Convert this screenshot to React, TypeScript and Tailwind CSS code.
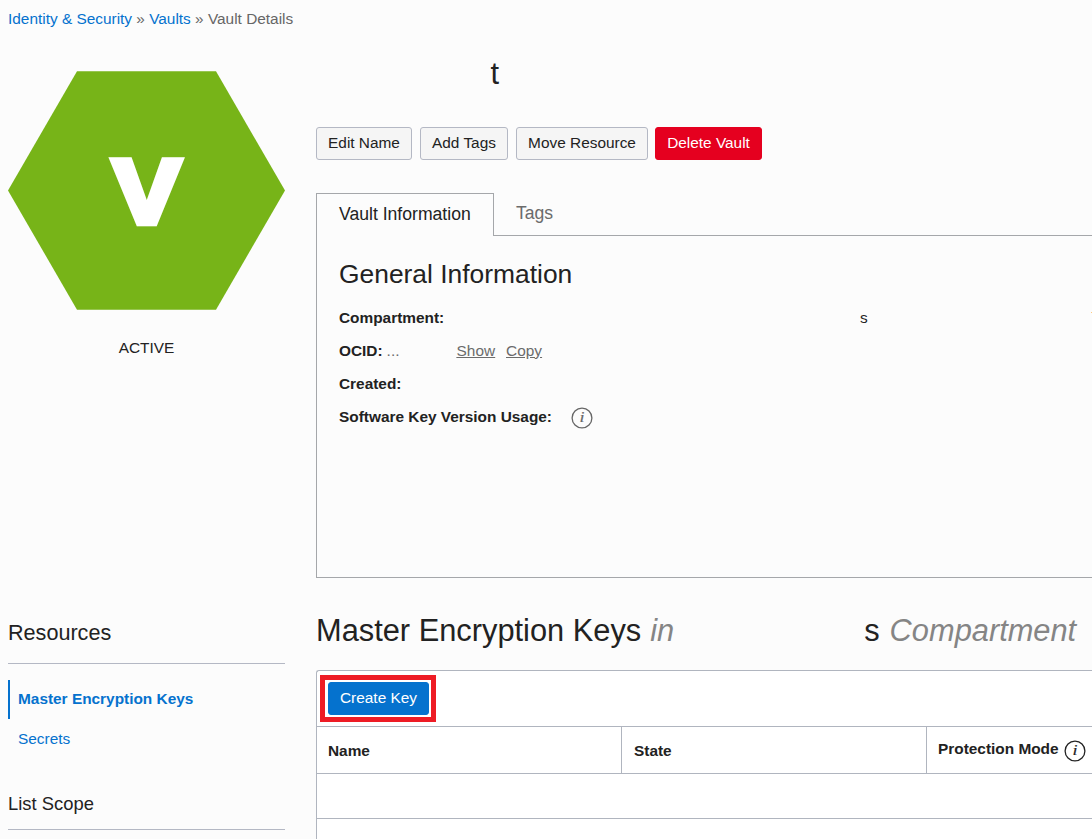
import type { ReactNode } from "react";

function InfoIcon({ className }: { className: string }) {
  return (
    <svg width="22" height="22" viewBox="0 0 22 22" className={className}>
      <circle cx="11" cy="11" r="9.9" fill="none" stroke="currentColor" strokeWidth="1.3" />
      <text
        transform="translate(11 15.4) scale(1.25 1)"
        textAnchor="middle"
        fill="currentColor"
        stroke="currentColor"
        strokeWidth="0.15"
        className="font-['Liberation_Serif',serif] text-[14.5px] font-normal italic"
      >
        i
      </text>
    </svg>
  );
}

function Button({ className, children }: { className: string; children: ReactNode }) {
  return (
    <button
      className={`h-[33px] shrink-0 rounded-[3px] border pb-px text-center leading-[30px] whitespace-nowrap ${className}`}
    >
      {children}
    </button>
  );
}

const neutral = "border-[#b4b8c4] bg-[#f5f5f5] text-[#222]";

function Sidebar() {
  return (
    <aside className="w-[277px] shrink-0">
      <div className="pt-[33px]">
        <svg width="277" height="239" viewBox="0 0 277 239" className="block">
          <polygon points="69,0.3 208,0.3 277,119.5 208,238.7 69,238.7 0,119.5" fill="#77b418" />
          <text
            transform="translate(138.7 151.8) scale(1.11 1)"
            textAnchor="middle"
            fill="#fff"
            stroke="#fff"
            strokeWidth="6.6"
            strokeLinejoin="miter"
            className="font-['Liberation_Sans',Arial,sans-serif] text-[91px] font-bold"
          >
            V
          </text>
        </svg>
      </div>
      <p className="mt-[28px] text-center leading-[20px]">ACTIVE</p>

      <h2 className="mt-[260px] h-[46px] border-b border-[#b4b8c4] text-[21.6px] leading-[30px]">Resources</h2>
      <nav className="mt-[16px] text-[#0572ce]">
        <a className="block h-[39px] border-l-2 border-[#0572ce] pl-2 leading-[38px] font-bold">
          Master Encryption Keys
        </a>
        <a className="block h-[39px] pl-[10px] leading-[40px]">Secrets</a>
      </nav>
      <h2 className="mt-[31px] h-[41px] border-b border-[#b4b8c4] text-[18.4px] leading-[30px]">List Scope</h2>
    </aside>
  );
}

function VaultPanel() {
  return (
    <section className="mt-[33px]">
      <div className="flex h-[43px] text-[17.6px]">
        <div className="w-[178px] border-x border-t border-[#a5a7aa] pl-[22px] leading-[41px]">Vault Information</div>
        <div className="flex-1 border-b border-[#a5a7aa] pl-[22px] leading-[40px] text-[#6b6b6b]">Tags</div>
      </div>
      <div className="h-[342px] border-b border-l border-[#a5a7aa] pt-[22px] pl-[22px]">
        <h2 className="text-[26.4px] leading-[32px]">General Information</h2>
        <dl className="mt-[11px] leading-[33px]">
          <div className="flex h-[33px]">
            <dt className="w-[521px] font-bold">Compartment:</dt>
            <dd>s</dd>
          </div>
          <div className="flex h-[33px]">
            <dt className="font-bold">OCID:</dt>
            <dd className="ml-[4px] w-[70px] text-[#6b6b6b]">...</dd>
            <dd className="flex gap-[11px] text-[#6b6b6b] underline">
              <a>Show</a>
              <a>Copy</a>
            </dd>
          </div>
          <div className="h-[33px]">
            <dt className="font-bold">Created:</dt>
          </div>
          <div className="flex h-[33px]">
            <dt className="font-bold">Software Key Version Usage:</dt>
            <dd className="pt-[7px] pl-[19px]">
              <InfoIcon className="text-[#666]" />
            </dd>
          </div>
        </dl>
      </div>
    </section>
  );
}

function KeysTable() {
  return (
    <section>
      <h1 className="mt-[33px] flex h-[59px] text-[30.8px] leading-[40px] whitespace-nowrap">
        <span>Master Encryption Keys</span>
        <span className="ml-[9px] w-[214px] text-[#858585] italic">in</span>
        <span>s</span>
        <span className="ml-[10px] text-[#858585] italic">Compartment</span>
      </h1>
      <div className="h-[200px] rounded-tl-[3px] border-t border-l border-[#b0b5bf] bg-white">
        <div className="flex h-[55px] items-start pt-[4px] pl-[3px]">
          <div className="border-[5px] border-[#ee1c25] py-[2px] pr-[2px] pl-[3px]">
            <Button className="block w-[101px] border-[#0572ce] bg-[#0572ce] text-white">Create Key</Button>
          </div>
        </div>
        <div className="flex h-[48px] border-y border-[#b0b5bf] leading-[47px] font-bold">
          <div className="w-[305px] shrink-0 border-r border-[#b0b5bf] pl-[11px]">Name</div>
          <div className="w-[305px] shrink-0 border-r border-[#b0b5bf] pl-[12px]">State</div>
          <div className="flex shrink-0 pl-[11px] leading-[44px]">
            Protection Mode
            <InfoIcon className="mt-[13px] ml-[5px] text-[#222]" />
          </div>
        </div>
        <div className="h-[45px] border-b border-[#b0b5bf]" />
      </div>
    </section>
  );
}

export default function App() {
  return (
    <div className="relative h-[839px] w-[1092px] overflow-hidden bg-[#fcfcfc] pl-2 font-['Liberation_Sans',Arial,sans-serif] text-[15.4px] text-[#222]">
      <nav className="h-[38px] leading-[38px] whitespace-pre text-[#666]">
        <a className="text-[#0572ce]">Identity &amp; Security</a>
        {" » "}
        <a className="text-[#0572ce]">Vaults</a>
        {" » Vault Details"}
      </nav>
      <div className="flex gap-[31px]">
        <Sidebar />
        <main className="min-w-0 flex-1">
          <h1 className="h-[89px] pt-[16px] pl-[174.5px] text-[30.8px] leading-[40px]">t</h1>
          <div className="flex">
            <Button className={`w-[96px] ${neutral}`}>Edit Name</Button>
            <Button className={`ml-2 w-[88px] ${neutral}`}>Add Tags</Button>
            <Button className={`ml-2 w-[132px] ${neutral}`}>Move Resource</Button>
            <Button className="ml-[7px] w-[107px] border-[#e5001f] bg-[#e5001f] text-white">Delete Vault</Button>
          </div>
          <VaultPanel />
          <KeysTable />
        </main>
      </div>
      <div className="absolute top-[312px] right-0 size-px bg-[#ffcb80]" />
    </div>
  );
}
